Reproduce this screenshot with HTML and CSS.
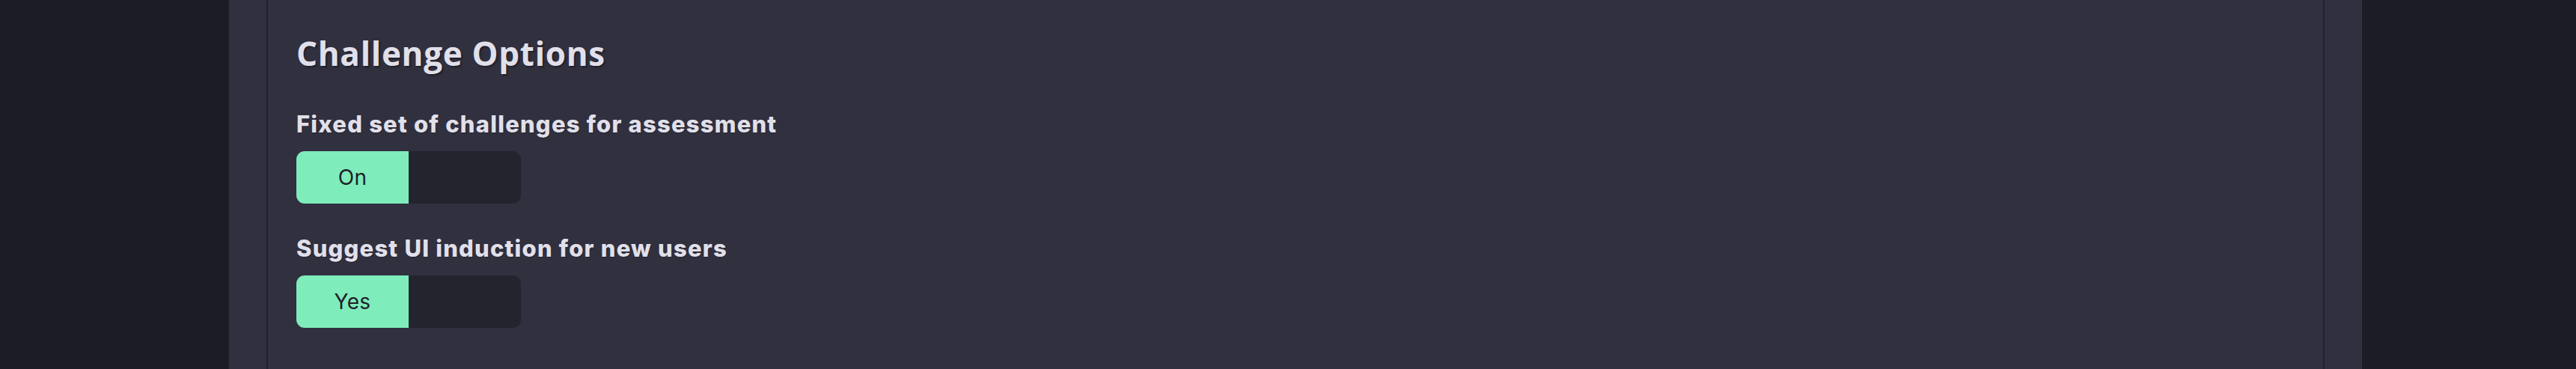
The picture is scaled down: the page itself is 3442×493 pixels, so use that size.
FILE: index.html
```html
<!DOCTYPE html>
<html lang="en">
<head>
<meta charset="utf-8">
<title>Challenge Options</title>
<link rel="stylesheet" href="styles.css">
</head>
<body>
<div class="page">
  <div class="gutter gutter-left"></div>
  <main class="panel">
    <section class="card">
      <h2 class="card-title">Challenge Options</h2>
      <div class="option">
        <div class="option-label">Fixed set of challenges for assessment</div>
        <div class="toggle">
          <span class="toggle-on">On</span>
          <span class="toggle-off"></span>
        </div>
      </div>
      <div class="option">
        <div class="option-label">Suggest UI induction for new users</div>
        <div class="toggle">
          <span class="toggle-on">Yes</span>
          <span class="toggle-off"></span>
        </div>
      </div>
    </section>
  </main>
  <div class="gutter gutter-right"></div>
</div>
</body>
</html>
```

FILE: styles.css
```css
html, body {
  margin: 0;
  padding: 0;
  height: 493px;
  overflow: hidden;
  background: #1c1c27;
}

.page {
  display: flex;
  height: 493px;
}

.gutter {
  background: #1c1c27;
}

.gutter-left {
  width: 306px;
  flex: none;
}

.gutter-right {
  flex: 1;
}

.panel {
  width: 2850px;
  flex: none;
  box-sizing: border-box;
  padding: 0 50px;
  background: #31303f;
}

.card {
  height: 100%;
  box-sizing: border-box;
  border-left: 2px solid #22212d;
  border-right: 2px solid #22212d;
  padding: 45px 38px 0;
}

.card-title {
  margin: 0 0 50px;
  font-family: "Open Sans", "DejaVu Sans", sans-serif;
  font-weight: 700;
  font-size: 44px;
  line-height: 1.2;
  color: #e1e0ea;
  text-shadow: 2px 2px 2px rgba(0, 0, 0, 0.35);
  letter-spacing: 0.7px;
}

.option {
  margin-bottom: 42px;
}

.option-label {
  font-family: "Inter", "Open Sans", sans-serif;
  font-weight: 800;
  font-size: 31px;
  line-height: 36px;
  color: #e1e0ea;
  letter-spacing: 1.2px;
  margin-bottom: 18px;
  text-shadow: 1px 1px 1px rgba(0, 0, 0, 0.25);
}

.toggle {
  display: flex;
  width: 300px;
  height: 70px;
  border-radius: 11px;
  overflow: hidden;
}

.toggle-on,
.toggle-off {
  flex: 1;
  display: flex;
  align-items: center;
  justify-content: center;
}

.toggle-on {
  background: #7eecbb;
  color: #1f1f2a;
  font-family: "Inter", "Open Sans", sans-serif;
  font-weight: 400;
  font-size: 28px;
  letter-spacing: 0.3px;
}

.toggle-off {
  background: #24242f;
}
```
